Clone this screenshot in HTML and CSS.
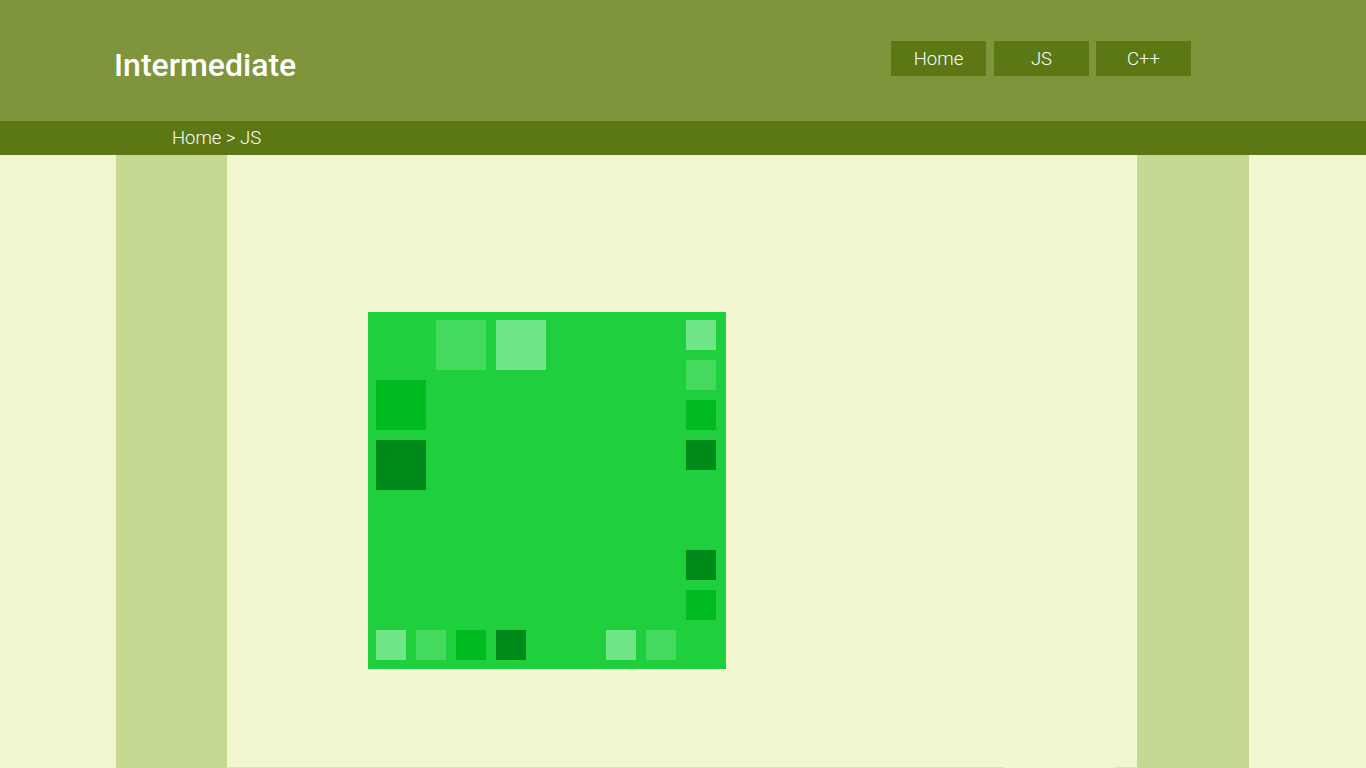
FILE: index.html
```html
<!DOCTYPE html>
<html>
<head>
<meta charset="utf-8">
<link rel="stylesheet" href="styles.css">
</head>
<body>
<header class="top">
  <h1 class="title">Intermediate</h1>
  <nav class="nav">
    <a class="nav-btn">Home</a>
    <a class="nav-btn">JS</a>
    <a class="nav-btn last">C++</a>
  </nav>
</header>
<div class="crumbs">Home &gt; JS</div>
<div class="layout">
  <aside class="side"></aside>
  <main class="main">
    <div class="board">
      <span class="pc big mid" style="left:68px;top:8px"></span>
      <span class="pc big light" style="left:128px;top:8px"></span>
      <span class="pc big dark" style="left:8px;top:68px"></span>
      <span class="pc big darker" style="left:8px;top:128px"></span>

      <span class="pc light" style="left:318px;top:8px"></span>
      <span class="pc mid" style="left:318px;top:48px"></span>
      <span class="pc dark" style="left:318px;top:88px"></span>
      <span class="pc darker" style="left:318px;top:128px"></span>
      <span class="pc darker" style="left:318px;top:238px"></span>
      <span class="pc dark" style="left:318px;top:278px"></span>

      <span class="pc light" style="left:8px;top:318px"></span>
      <span class="pc mid" style="left:48px;top:318px"></span>
      <span class="pc dark" style="left:88px;top:318px"></span>
      <span class="pc darker" style="left:128px;top:318px"></span>
      <span class="pc light" style="left:238px;top:318px"></span>
      <span class="pc mid" style="left:278px;top:318px"></span>
    </div>
    <div class="foot">
      <span class="foot-line wide"></span>
      <span class="foot-gap"></span>
      <span class="foot-line"></span>
    </div>
  </main>
  <aside class="side"></aside>
</div>
</body>
</html>
```
FILE: styles.css
```css
html, body {
  margin: 0;
  padding: 0;
  background: #f2f7d1;
  font-family: Roboto, "Liberation Sans", sans-serif;
  height: 768px;
  overflow: hidden;
}
.top {
  height: 121px;
  background: #7e953b;
  display: flex;
  align-items: flex-start;
  justify-content: space-between;
  padding: 0 175px 0 114px;
  box-sizing: border-box;
}
.title {
  margin: 0;
  padding-top: 45px;
  font-size: 32px;
  line-height: 40px;
  font-weight: 500;
  color: #fff;
}
.nav {
  display: flex;
  gap: 8px;
  padding-top: 41px;
}
.nav-btn {
  width: 95px;
  height: 35px;
  background: #5b7815;
  color: #fff;
  font-size: 18.5px;
  font-weight: 300;
  display: flex;
  align-items: center;
  justify-content: center;
}
.nav-btn.last { margin-left: -1px; }
.crumbs {
  height: 34px;
  background: #5b7815;
  color: #fff;
  font-size: 18.5px;
  font-weight: 300;
  line-height: 34px;
  padding-left: 172px;
}
.layout {
  display: grid;
  grid-template-columns: 111px 910px 112px;
  margin-left: 116px;
  height: 613px;
}
.side { background: #c5d993; }
.main {
  background: #f2f7d1;
  padding: 157px 0 0 141px;
  display: flex;
  flex-direction: column;
  align-items: flex-start;
}
.board {
  position: relative;
  width: 358px;
  height: 357px;
  background: #20cf3d;
}
.pc {
  position: absolute;
  width: 30px;
  height: 30px;
}
.pc.big { width: 50px; height: 50px; }
.light { background: #70e585; }
.mid { background: #45d95e; }
.dark { background: #00bb20; }
.darker { background: #008a19; }
.foot {
  margin-top: auto;
  margin-left: -140px;
  display: flex;
  width: 909px;
  height: 1px;
}
.foot-line {
  flex: 1;
  background: #dbe5b4;
}
.foot-line.wide { flex: 0 0 776px; }
.foot-gap { flex: 0 0 110px; }
```
